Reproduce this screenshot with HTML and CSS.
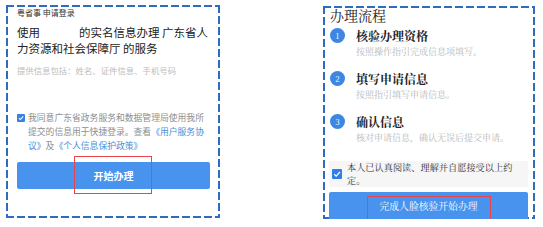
FILE: index.html
```html
<!DOCTYPE html>
<html lang="zh-CN">
<head>
<meta charset="utf-8">
<title>申请登录与办理流程</title>
<link rel="stylesheet" href="styles.css">
</head>
<body>
<div class="page">
  <section class="panel panel-left">
    <div class="app-title">粤省事 申请登录</div>
    <p class="lead">使用<span class="blank"></span>的实名信息办理 广东省人<br>力资源和社会保障厅 的服务</p>
    <p class="info">提供信息包括：姓名、证件信息、手机号码</p>
    <div class="agree">
      <span class="check check-sm"><svg viewBox="0 0 10 10" width="8" height="8"><path d="M2.3 5.2 L4.2 7 L7.8 3" fill="none" stroke="#fff" stroke-width="1.3"/></svg></span>
      <p class="agree-text">我同意广东省政务服务和数据管理局使用我所<br>提交的信息用于快捷登录。查看<a class="link">《用户服务协<br>议》</a>及<a class="link">《个人信息保护政策》</a></p>
    </div>
    <div class="btn btn-left">开始办理<span class="mark mark-left"></span></div>
  </section>

  <section class="panel panel-right">
    <h2 class="flow-title">办理流程</h2>
    <div class="step">
      <div class="step-head"><span class="num">1</span><span class="step-name">核验办理资格</span></div>
      <div class="step-desc">按照操作指引完成信息项填写。</div>
    </div>
    <div class="step">
      <div class="step-head"><span class="num">2</span><span class="step-name">填写申请信息</span></div>
      <div class="step-desc">按照指引填写申请信息。</div>
    </div>
    <div class="step">
      <div class="step-head"><span class="num">3</span><span class="step-name">确认信息</span></div>
      <div class="step-desc">核对申请信息，确认无误后提交申请。</div>
    </div>
    <div class="confirm">
      <span class="check check-md"><svg viewBox="0 0 10 10" width="10" height="10"><path d="M2.2 5.2 L4.2 7.1 L7.9 3" fill="none" stroke="#fff" stroke-width="1.2"/></svg></span>
      <p class="confirm-text">本人已认真阅读、理解并自愿接受以上约<br>定。</p>
    </div>
    <div class="btn btn-right">完成人脸核验开始办理<span class="mark mark-right"></span></div>
  </section>
</div>
</body>
</html>
```
FILE: styles.css
```css
html, body {
  margin: 0;
  padding: 0;
  background: #ffffff;
}

.page {
  display: flex;
  align-items: flex-start;
  gap: 103px;
  padding: 5px 0 0 6px;
  font-family: "Noto Sans CJK SC", "Liberation Sans", sans-serif;
  color: #222;
}

.panel {
  box-sizing: border-box;
  position: relative;
  height: 213px;
  background:
    repeating-linear-gradient(90deg, #2e6bc2 0 8px, transparent 8px 11px) left top / 100% 2px no-repeat,
    repeating-linear-gradient(90deg, #2e6bc2 0 8px, transparent 8px 11px) left bottom / 100% 2px no-repeat,
    repeating-linear-gradient(180deg, #2e6bc2 0 8px, transparent 8px 11px) left top / 2px 100% no-repeat,
    repeating-linear-gradient(180deg, #2e6bc2 0 8px, transparent 8px 11px) right top / 2px 100% no-repeat;
}

/* ---------- left panel ---------- */
.panel-left {
  width: 214px;
  padding: 2px 10px 0 11px;
}

.app-title {
  font-size: 8px;
  line-height: 12px;
  color: #333;
}

.lead {
  margin: 5px 0 0;
  font-size: 11.5px;
  line-height: 16px;
  color: #222;
}

.blank {
  display: inline-block;
  width: 39px;
}

.info {
  margin: 8px 0 0;
  font-size: 8.4px;
  line-height: 12px;
  color: #bdbdbd;
}

.agree {
  display: flex;
  align-items: flex-start;
  gap: 3px;
  margin-top: 35px;
}

.check {
  flex: none;
  display: flex;
  align-items: center;
  justify-content: center;
  background: #3b82e0;
  border-radius: 1px;
}

.check-sm {
  width: 8px;
  height: 8px;
  margin-top: 3px;
}

.agree-text {
  margin: 0;
  font-size: 8.8px;
  line-height: 14px;
  color: #8e8e8e;
}

.link {
  color: #4a8fd8;
}

.btn {
  position: relative;
  display: flex;
  align-items: center;
  justify-content: center;
  background: #4893ee;
  color: #fff;
  border-radius: 2px;
}

.btn-left {
  height: 27px;
  margin-top: 9px;
  font-size: 10px;
  font-weight: 700;
}

.mark {
  position: absolute;
  box-sizing: border-box;
  border: 1.5px solid #e8454a;
}

.mark-left {
  left: 57px;
  top: -6px;
  width: 78px;
  height: 38px;
}

/* ---------- right panel ---------- */
.panel-right {
  width: 212px;
  margin-top: 1px;
  padding: 0 7px 0 6px;
  font-family: "Noto Serif CJK SC", "Noto Sans CJK SC", serif;
}

.flow-title {
  margin: 0 0 0 1px;
  font-size: 14px;
  line-height: 18px;
  font-weight: 400;
  color: #1e1e1e;
}

.step {
  margin: 3px 0 0 1px;
}

.step + .step {
  margin-top: 12px;
}

.step-head {
  display: flex;
  align-items: center;
  gap: 11px;
  height: 16px;
}

.num {
  flex: none;
  width: 15px;
  height: 15px;
  border-radius: 50%;
  background: #3d87e2;
  color: #fff;
  font-size: 8px;
  line-height: 15px;
  text-align: center;
}

.step-name {
  font-size: 12px;
  font-weight: 700;
  color: #222;
}

.step-desc {
  margin: 3px 0 0 26px;
  font-size: 9px;
  line-height: 12px;
  color: #b8b8b8;
}

.confirm {
  display: flex;
  align-items: flex-start;
  gap: 5px;
  margin-top: 17px;
  padding: 0 3px;
  height: 26px;
  box-sizing: border-box;
  background: #f6f6f6;
}

.check-md {
  width: 10px;
  height: 10px;
  margin-top: 8px;
  background: #2f7fe8;
}

.confirm-text {
  margin: 0;
  font-size: 9.2px;
  line-height: 13px;
  color: #333;
}

.btn-right {
  height: 27px;
  margin-top: 5px;
  font-size: 9.8px;
  border-radius: 2px 2px 0 0;
}

.mark-right {
  left: 38px;
  top: 4px;
  width: 124px;
  height: 25px;
}
```
